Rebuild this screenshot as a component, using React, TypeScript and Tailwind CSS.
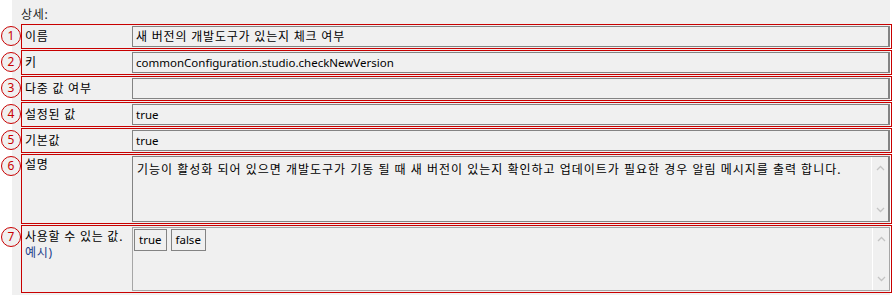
import React from 'react';

const font = { fontFamily: '"Noto Sans", "Noto Sans CJK KR", sans-serif' };

function Badge({ n }: { n: number }) {
  return (
    <div className="absolute -left-[21px] top-[1px] w-[20px] h-[20px] rounded-full border border-[#c80000] bg-[#f0f0f0] text-[#c80000] text-[12px] leading-none tracking-normal flex items-center justify-center">
      {n}
    </div>
  );
}

function Scroll() {
  return (
    <div className="w-[17px] border-l border-white flex flex-col items-center justify-between py-[8px] text-[#c4c4c4]">
      <svg width="9" height="6" viewBox="0 0 9 6">
        <path d="M1 5 L4.5 1.5 L8 5" fill="none" stroke="currentColor" strokeWidth="1.3" />
      </svg>
      <svg width="9" height="6" viewBox="0 0 9 6">
        <path d="M1 1 L4.5 4.5 L8 1" fill="none" stroke="currentColor" strokeWidth="1.3" />
      </svg>
    </div>
  );
}

function Field({ n, label, value, latin }: { n: number; label: string; value: string; latin?: boolean }) {
  return (
    <div className="relative flex h-[25px] border border-[#c80000] p-[1px]">
      <Badge n={n} />
      <div className="w-[109px] pl-[2px] flex items-center text-[12px] tracking-[0.75px] text-black">{label}</div>
      <div
        className={
          latin
            ? 'flex-1 flex items-center border border-[#838383] border-r-2 pl-[3px] text-[11.5px] text-black'
            : 'flex-1 flex items-center border border-[#838383] border-r-2 pl-[3px] text-[12px] tracking-[0.8px] text-black'
        }
      >
        {value}
      </div>
    </div>
  );
}

export default function App() {
  return (
    <div className="w-[896px] h-[295px] bg-white overflow-hidden" style={font}>
      <div className="ml-[12px] w-[878px] h-full bg-[#f0f0f0] pl-[9px] pt-[6px]">
        <div className="h-[18px] text-[12px] leading-[18px] tracking-[0.75px] text-[#222]">상세:</div>
        <div className="flex flex-col gap-[1px] w-[871px]">
          <Field n={1} label="이름" value="새 버전의 개발도구가 있는지 체크 여부" />
          <Field n={2} label="키" value="commonConfiguration.studio.checkNewVersion" latin />
          <Field n={3} label="다중 값 여부" value="" />
          <Field n={4} label="설정된 값" value="true" latin />
          <Field n={5} label="기본값" value="true" latin />

          {/* description */}
          <div className="relative flex h-[70px] border border-[#c80000] p-[1px]">
            <Badge n={6} />
            <div className="w-[109px] pl-[2px] pt-[1px] text-[12px] leading-[16px] tracking-[0.75px] text-black">설명</div>
            <div className="flex-1 flex border border-[#838383] border-r-2">
              <div className="flex-1 pl-[4px] pt-[5px] text-[12px] leading-[16px] tracking-[1px] text-black">
                기능이 활성화 되어 있으면 개발도구가 기동 될 때 새 버전이 있는지 확인하고 업데이트가 필요한 경우 알림 메시지를 출력 합니다.
              </div>
              <Scroll />
            </div>
          </div>

          {/* allowed values */}
          <div className="relative flex h-[68px] border border-[#c80000] p-[1px]">
            <Badge n={7} />
            <div className="w-[109px] pl-[2px] pt-[2px] text-[12px] leading-[16px] tracking-[0.75px] text-black">
              <div>사용할 수 있는 값.</div>
              <div className="text-[#23408c]">예시)</div>
            </div>
            <div className="flex-1 flex border border-[#a6a6a6]">
              <div className="flex-1 flex items-start gap-[4px] pl-[1px] pt-[1px]">
                <span className="h-[22px] px-[4px] flex items-center border border-[#838383] text-[11.5px] text-black">true</span>
                <span className="h-[22px] px-[4px] flex items-center border border-[#838383] text-[11.5px] text-black">false</span>
              </div>
              <Scroll />
            </div>
          </div>
        </div>
      </div>
    </div>
  );
}
